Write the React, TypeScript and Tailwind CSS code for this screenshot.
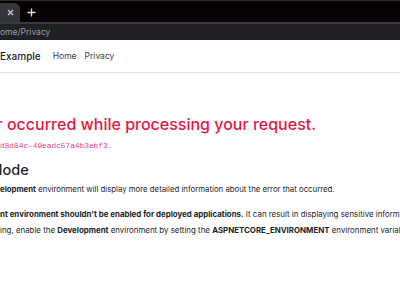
import React, { useLayoutEffect, useRef, useState } from "react";

function Clip({ prefix, extra = 0, className = "", children }: { prefix: React.ReactNode; extra?: number; className?: string; children: React.ReactNode }) {
  const ref = useRef<HTMLSpanElement>(null);
  const [w, setW] = useState(0);
  useLayoutEffect(() => {
    if (ref.current) setW(ref.current.getBoundingClientRect().width);
  }, []);
  return (
    <div className={"whitespace-nowrap " + className} style={{ marginLeft: -(w + extra) }}>
      <span ref={ref}>{prefix}</span>
      {children}
    </div>
  );
}

export default function App() {
  return (
    <div className="w-[400px] h-[284px] overflow-hidden bg-white" style={{ fontFamily: 'Inter, "Liberation Sans", Arial, sans-serif' }}>
      {/* tab strip */}
      <div className="h-[22px] bg-[#070303] border-t border-[#2e2a2a] flex items-end">
        <div className="w-[20px] h-[19px] bg-[#35363a] rounded-tr-[6px] flex items-center justify-end pr-[6px]">
          <svg width="7" height="7" viewBox="0 0 7 7" className="mb-[1px]">
            <path d="M1 1L6 6M6 1L1 6" stroke="#c8c8c8" strokeWidth="1.3" />
          </svg>
        </div>
        <div className="h-[19px] flex items-center ml-[7px]">
          <svg width="9" height="9" viewBox="0 0 9 9">
            <path d="M4.5 0.5V8.5M0.5 4.5H8.5" stroke="#e0e0e0" strokeWidth="1.3" />
          </svg>
        </div>
      </div>
      {/* address bar */}
      <div className="h-[18px] bg-[#202124] border-t-2 border-[#3a3a3c] flex items-center">
        <Clip prefix="localhost:5001/H" extra={0} className="text-[8.5px] text-[#9aa0a6]">
          ome/Privacy
        </Clip>
      </div>
      {/* navbar */}
      <div className="h-[33px] bg-white border-b border-[#e5e5e5] shadow-[0_1px_3px_rgba(0,0,0,0.05)] flex items-center whitespace-nowrap">
        <span className="text-[10px] font-medium text-[#212529]">Example</span>
        <span className="text-[8.5px] text-[#3c3c3c] ml-[12px]">Home</span>
        <span className="text-[8.5px] text-[#3c3c3c] ml-[8px]">Privacy</span>
      </div>
      {/* content */}
      <div className="text-[#212529]">
        <Clip prefix="An erro" extra={3.5} className="mt-[40px] text-[16px] leading-[22px] font-medium text-[#e5173f]">
          r occurred while processing your request.
        </Clip>
        <Clip
          prefix={
            <>
              <strong>Request ID:</strong>{" "}
              <code className="text-[#e83e8c]" style={{ fontFamily: '"Liberation Mono", monospace' }}>00-4a1f0c6e9b2d7c3e8f01ab5d8</code>
            </>
          }
          className="mt-[4px] text-[7.8px] leading-[12px]"
        >
          <code className="text-[#e83e8c] text-[7.8px]" style={{ fontFamily: '"Liberation Mono", monospace' }}>d8d84c-49eadc57a4b3ebf3.</code>
        </Clip>
        <Clip prefix="Development M" extra={-2.5} className="mt-[9px] text-[14.5px] leading-[18px] font-medium">
          ode
        </Clip>
        <Clip
          prefix={
            <>
              Swapping to the <strong>Dev</strong>
            </>
          }
          className="mt-[4px] text-[7.8px] leading-[12px]"
        >
          <strong>elopment</strong> environment will display more detailed information about the error that occurred.
        </Clip>
        <Clip prefix={<strong>The Developme</strong>} className="mt-[11px] text-[7.9px] leading-[16px]">
          <strong>nt environment shouldn't be enabled for deployed applications.</strong> It can result in displaying sensitive information from exceptions to end users. For local
        </Clip>
        <Clip prefix="debugg" className="text-[7.9px] leading-[16px]">
          ing, enable the <strong>Development</strong> environment by setting the <strong>ASPNETCORE_ENVIRONMENT</strong> environment variable to <strong>Development</strong> and restarting the app.
        </Clip>
      </div>
    </div>
  );
}
